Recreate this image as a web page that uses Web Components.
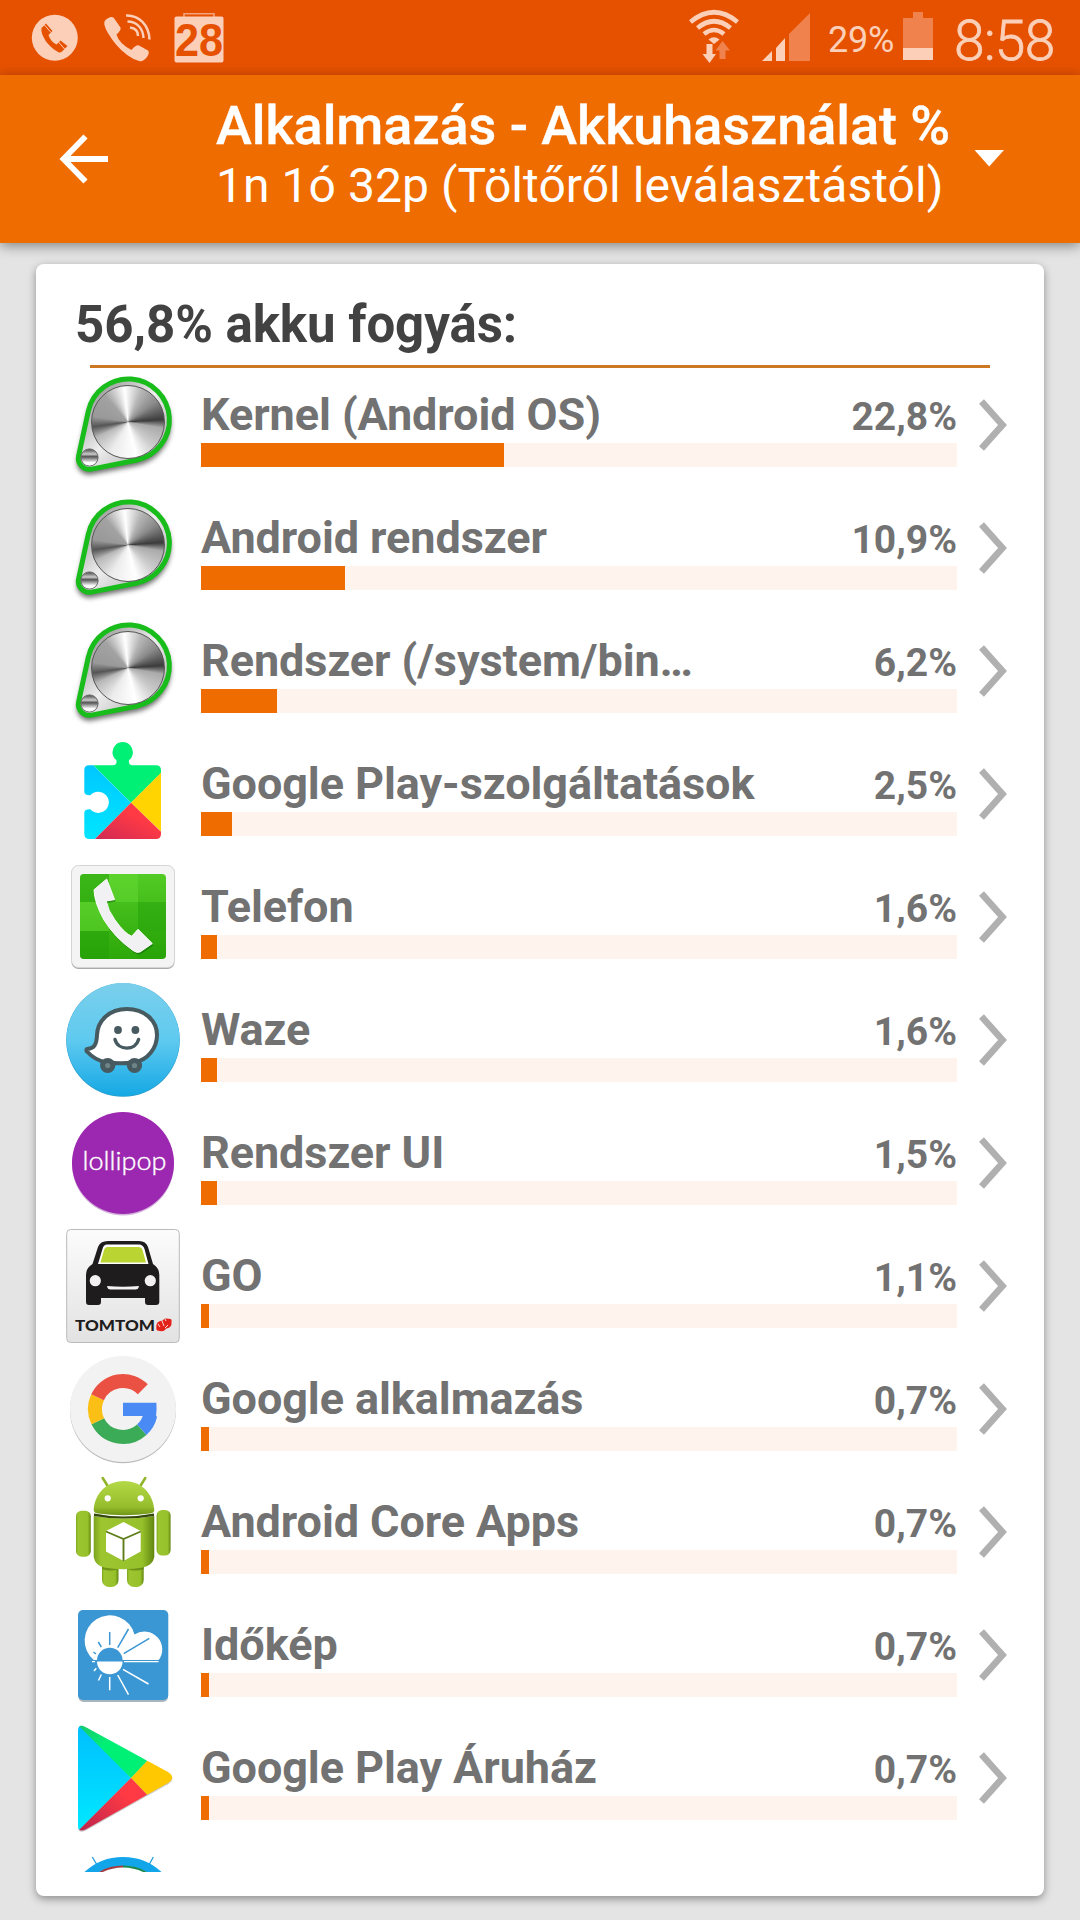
<!DOCTYPE html>
<html lang="hu">
<head>
<meta charset="utf-8">
<title>Akkuhasználat</title>
<style>
    html, body {
        margin: 0;
        height: 1920px;
        overflow: hidden;
        background: #e4e4e4;
        font-family: Roboto, sans-serif;
    }
    body {
        display: flex;
        flex-direction: column;
    }
</style>
</head>
<body>
<status-bar time="8:58" battery="29%"></status-bar>
<app-header>
    <span slot="title">Alkalmazás - Akkuhasználat %</span>
    <span slot="subtitle">1n 1ó 32p (Töltőről leválasztástól)</span>
</app-header>
<usage-card>
    <span slot="heading">56,8% akku fogyás:</span>
    <usage-row icon="knob" value="22,8%" fill="303">Kernel (Android OS)</usage-row>
    <usage-row icon="knob" value="10,9%" fill="144">Android rendszer</usage-row>
    <usage-row icon="knob" value="6,2%" fill="76">Rendszer (/system/bin…</usage-row>
    <usage-row icon="services" value="2,5%" fill="31">Google Play-szolgáltatások</usage-row>
    <usage-row icon="phone" value="1,6%" fill="16">Telefon</usage-row>
    <usage-row icon="waze" value="1,6%" fill="16">Waze</usage-row>
    <usage-row icon="lollipop" value="1,5%" fill="16">Rendszer UI</usage-row>
    <usage-row icon="tomtom" value="1,1%" fill="8">GO</usage-row>
    <usage-row icon="google" value="0,7%" fill="8">Google alkalmazás</usage-row>
    <usage-row icon="android" value="0,7%" fill="8">Android Core Apps</usage-row>
    <usage-row icon="weather" value="0,7%" fill="8">Időkép</usage-row>
    <usage-row icon="play" value="0,7%" fill="8">Google Play Áruház</usage-row>
    <app-icon name="ring"></app-icon>
</usage-card>

<script>
// All icons are drawn on a 114 x 114 canvas
const icons = {
    knob: `
        <defs>
            <linearGradient id="plate" x1="0" y1="0" x2="1" y2="1">
                <stop offset="0" stop-color="#777"/><stop offset=".5" stop-color="#eee"/><stop offset="1" stop-color="#999"/>
            </linearGradient>
            <filter id="soft" x="-20%" y="-20%" width="140%" height="140%"><feGaussianBlur stdDeviation="2.6"/></filter>
            <linearGradient id="screw" x1="0" y1="0" x2="0" y2="1">
                <stop offset="0" stop-color="#444"/><stop offset=".3" stop-color="#ccc"/><stop offset=".45" stop-color="#555"/><stop offset=".8" stop-color="#fff"/>
            </linearGradient>
        </defs>
        <path d="M22.3 43.3A41 41 0 1 1 70.3 92.2L25.4 101.1A11 11 0 0 1 12.6 88Z" transform="translate(0 4)" fill="#333" stroke="#333" stroke-width="3" opacity=".7" filter="url(#soft)"/>
        <path d="M22.3 43.3A41 41 0 1 1 70.3 92.2L25.4 101.1A11 11 0 0 1 12.6 88Z" fill="url(#plate)" stroke="#18bd1c" stroke-width="5"/>
        <foreignObject x="25" y="17" width="74" height="74"><div class="disc"></div></foreignObject>
        <circle cx="23.5" cy="89.5" r="8.6" fill="url(#screw)" stroke="#666" stroke-width="1"/>`,
    services: `
        <defs>
            <clipPath id="puzzle"><path d="M23 28.3H47Q51.5 28 50.3 23.1A10.2 10.2 0 1 1 63.1 23.1Q62 28 66.5 28.3H90Q95 28.3 95 33.3V97Q95 102 90 102H23.3Q18.3 102 18.3 97V75.5Q18.8 72 24.3 72.3A10.6 10.6 0 1 0 24.3 58.3Q18.8 58.6 18.3 55V33.3Q18.3 28.3 23 28.3Z"/></clipPath>
            <linearGradient id="blue" x1="0" y1="0" x2="0" y2="1"><stop offset="0" stop-color="#00c3ff"/><stop offset="1" stop-color="#00e6ff"/></linearGradient>
            <linearGradient id="red" x1="1" y1="0" x2="0" y2="1"><stop offset=".4" stop-color="#ff3a44"/><stop offset="1" stop-color="#cf2955"/></linearGradient>
        </defs>
        <g clip-path="url(#puzzle)">
            <path d="M0 0H114V17L65 65.7 27.3 28.3Z" fill="#00f076"/>
            <path d="M18 19L65 65.7 28 103H10V19Z" fill="url(#blue)"/>
            <path d="M65 65.7L96 34.7V95.5Z" fill="#ffd400"/>
            <path d="M65 65.7L103 102.5H28.5Z" fill="url(#red)"/>
        </g>`,
    phone: `
        <defs>
            <clipPath id="in"><rect x="14" y="14" width="86" height="85" rx="4"/></clipPath>
            <linearGradient id="g" x1="0" y1="0" x2="0" y2="1"><stop offset="0" stop-color="#52cb25"/><stop offset="1" stop-color="#2da80a"/></linearGradient>
        </defs>
        <rect x="5.5" y="6.5" width="103" height="102.5" rx="7" fill="#aaa"/>
        <rect x="5.5" y="5.5" width="103" height="102" rx="7" fill="#f4f4f4" stroke="#d4d4d4"/>
        <g clip-path="url(#in)">
            <rect x="14" y="14" width="86" height="85" fill="url(#g)"/>
            <path d="M14 14H43V42H14ZM72 42H100V71H72ZM14 71H43V99H14Z" fill="#1f9a06" opacity=".42"/>
            <path d="M43 14H72V42H43ZM14 42H43V71H14Z" fill="#6de23a" opacity=".4"/>
            <path d="M72 71H100V99H72Z" fill="#229c06" opacity=".3"/>
        </g>
        <path d="M40.7 19.6L28 30.2Q28.5 43 38 60Q49 78 67 90.5Q70.5 93.3 74 92L86.3 83.5 72 69.8 65.8 76.5Q59 74 49 60Q42 50.5 40.2 41L48.6 39.6Z" transform="translate(1 2)" fill="#16720a" opacity=".65"/>
        <path d="M40.7 19L28 29.8Q28.5 43 38 60Q49 78 67 90.5Q70.5 93.3 74 92L86.3 83.5 72 69.3 65.8 76.2Q59 74 49 60Q42 50.5 40.2 41L48.6 39.6Z" fill="#f1f1f3" stroke="#fff" stroke-width="1" stroke-linejoin="round"/>`,
    waze: `
        <defs><linearGradient id="sky" x1="0" y1="0" x2="0" y2="1"><stop offset="0" stop-color="#7acfeb"/><stop offset=".5" stop-color="#5fcaf0"/><stop offset="1" stop-color="#15a8e4"/></linearGradient></defs>
        <circle cx="57" cy="57" r="56.8" fill="#2a9cc8"/>
        <circle cx="57" cy="56.6" r="56.5" fill="url(#sky)"/>
        <path d="M61 26C43 26 31.5 38 31 52C30.6 61 28.5 65.5 21.5 66C20 66.2 20 68 21.5 69C26.5 74.5 33 78 40 79.2Q55 81.5 69 79.2C82 76.5 91 65 91 52C91 37 78 26 61 26Z" fill="#fff" stroke="#465a60" stroke-width="4" stroke-linejoin="round"/>
        <g fill="#465a60"><circle cx="41.7" cy="82.5" r="7.6"/><circle cx="68.5" cy="82.5" r="7.6"/><circle cx="52" cy="47" r="3.9"/><circle cx="69.4" cy="47" r="3.9"/></g>
        <g fill="#6e8487"><circle cx="41.7" cy="82.5" r="2.6"/><circle cx="68.5" cy="82.5" r="2.6"/></g>
        <path d="M49 56.5C52 68 69.5 68 72.6 56.5" fill="none" stroke="#465a60" stroke-width="3.4" stroke-linecap="round"/>`,
    lollipop: `
        <circle cx="57" cy="58.5" r="51" fill="#d3b4da"/>
        <circle cx="57" cy="57" r="51" fill="#9c27b0"/>
        <text x="16.5" y="64" font-family="Lato" font-weight="300" font-size="25" textLength="84" lengthAdjust="spacingAndGlyphs" fill="#fff" stroke="#fff" stroke-width=".4">lollipop</text>`,
    tomtom: `
        <defs><linearGradient id="bg" x1="0" y1="0" x2="0" y2="1"><stop offset="0" stop-color="#fcfcfc"/><stop offset="1" stop-color="#e2e2e2"/></linearGradient></defs>
        <rect x=".7" y=".5" width="112.6" height="113" rx="4" fill="url(#bg)" stroke="#bbb"/>
        <path d="M42 12H73Q80 12 82 18L87 35Q93.3 39 93.3 46V73Q93.3 76 90 76H82Q79 76 79 73V69H35V73Q35 76 32 76H23Q20 76 20 73V46Q20 39 26.5 35L32 18Q34 12 42 12Z" fill="#1f1c1d"/>
        <path d="M41 15.5H73Q77 15.5 78.5 20L82.5 35H32L36.5 20Q37.5 15.5 41 15.5Z" fill="#fff"/>
        <path d="M41.5 18H72.5Q75.5 18 76.5 21L80 33.5H34.5L38 21Q39 18 41.5 18Z" fill="#bad532"/>
        <circle cx="29.3" cy="51.7" r="5.6" fill="#f1f1f1"/><circle cx="84.3" cy="51.7" r="5.6" fill="#f1f1f1"/>
        <path d="M41 57Q57 58.5 73 57Q72.5 60.5 69.5 60.5H44.5Q41.5 60.5 41 57Z" fill="#f1f1f1"/>
        <text x="9" y="101.8" font-family="Lato" font-weight="900" font-size="15" textLength="80" lengthAdjust="spacingAndGlyphs" fill="#1f1c1d">TOMTOM</text>
        <g fill="#e2231a"><circle cx="95.5" cy="97" r="5.2"/><circle cx="100.5" cy="94.5" r="5"/><circle cx="92.5" cy="99.5" r="2.2"/><circle cx="103.5" cy="92" r="2.2"/></g>
        <path d="M96 92L98 97M99 99L102 96M92 95L94 98M99 90L100 92" stroke="#fbd9d6" stroke-width="1"/>`,
    google: `
        <circle cx="57" cy="58.3" r="53" fill="#bbb"/>
        <circle cx="57" cy="57" r="53" fill="#f2f2f2"/>
        <g fill="none" stroke-width="14">
            <path d="M75.7 77.8A28 28 0 0 0 84.3 63" stroke="#4a8af4"/>
            <path d="M31.8 69.3A28 28 0 0 0 75.7 77.8" stroke="#3cab58"/>
            <path d="M31.6 45.2A28 28 0 0 0 31.8 69.3" stroke="#fbbf16"/>
            <path d="M76.8 37.2A28 28 0 0 0 31.6 45.2" stroke="#eb5143"/>
        </g>
        <path d="M57 50.7H90.4Q91 57 90 65L76 64H57Z" fill="#4a8af4"/>`,
    android: `
        <defs>
            <linearGradient id="b" x1="0" y1="0" x2="1" y2="0"><stop offset="0" stop-color="#7ba31c"/><stop offset=".12" stop-color="#9cc52f"/><stop offset=".8" stop-color="#97c12b"/><stop offset="1" stop-color="#62860f"/></linearGradient>
            <linearGradient id="hd" x1="0" y1="0" x2="0" y2="1"><stop offset="0" stop-color="#b3d947"/><stop offset=".75" stop-color="#96bd2b"/><stop offset="1" stop-color="#6f9518"/></linearGradient>
        </defs>
        <path d="M36.7 3L42 11.5M79.3 3L74 11.5" stroke="#8fb52b" stroke-width="2.6" stroke-linecap="round"/>
        <g fill="url(#b)">
            <rect x="36" y="84" width="16.5" height="28" rx="7"/><rect x="61" y="84" width="16.7" height="28" rx="7"/>
            <rect x="10" y="35.7" width="14.8" height="46" rx="5.5"/><rect x="90.6" y="35" width="14" height="45.5" rx="5.5"/>
        </g>
        <path d="M36 91H52.5V94Q44 97 36 94ZM61 91H77.7V94Q69 97 61 94Z" fill="#5c7d10" opacity=".7"/>
        <path d="M27.7 41Q57 46 88.3 41V82Q87 90 77 92.5Q57 96 38 92.5Q29 90 27.7 82Z" fill="url(#b)"/>
        <path d="M28 38.5Q57 44.5 88 38.5V41Q57 46 28 41Z" fill="#34480b"/>
        <path d="M27.7 35C29 17 42 6 58 6S87 17 88.3 35Q88.3 38 84 38.5Q58 42 32 38.5Q27.7 38 27.7 35Z" fill="url(#hd)"/>
        <circle cx="41.7" cy="23.3" r="3.1" fill="#fff"/><circle cx="74.7" cy="23.3" r="3.1" fill="#fff"/>
        <path d="M57.5 47L74.7 56V76.5L57.5 86 40 76.5V56Z" fill="#fff"/>
        <path d="M40 56.5L57.5 64 74.7 56.5M57.5 64V86" fill="none" stroke="#5f7d19" stroke-width="1.9"/>`,
    weather: `
        <rect x="12.5" y="14" width="89.5" height="90" rx="5" fill="#a9b6c0"/>
        <rect x="12" y="12" width="90.3" height="90" rx="5" fill="#3b97d3"/>
        <path d="M28 62.3A25.3 25.3 0 1 1 68.5 36.6A17.8 17.8 0 0 1 92.5 62.3Z" fill="#fff"/>
        <path d="M26 62.8H93" stroke="#3b97d3" stroke-width="1.4"/>
        <path d="M26 63.6H29M58 63.6H92.5" stroke="#fff" stroke-width="1.2"/>
        <path d="M31 62.5A12.8 12.8 0 0 1 56.6 62.5Z" fill="#3b97d3"/>
        <path d="M31 63.5A12.8 12.8 0 0 0 56.6 63.5Z" fill="#fff"/>
        <path d="M43.7 34V47M62.5 31L51.7 49.7M83.3 40.3L57.7 55.7M32.3 44L35.3 49M27.5 54L30 56" stroke="#3b97d3" stroke-width="1.5"/>
        <path d="M43.7 79V92.3M51.7 77L62.5 96.7M57 71.3L82.5 86M35.3 76.5L32.5 82.5M30.3 70.3L28 73" stroke="#fff" stroke-width="1.5"/>`,
    play: `
        <defs>
            <clipPath id="tri"><path d="M12 10Q12 2.5 19 5.7L102 51Q110.5 56.7 102 62L20 108.3Q12 112 12 104.5Z"/></clipPath>
            <linearGradient id="pb" x1="0" y1="0" x2="0" y2="1"><stop offset="0" stop-color="#00bdff"/><stop offset="1" stop-color="#00e8ff"/></linearGradient>
            <linearGradient id="pr" x1="1" y1="0" x2="0" y2="1"><stop offset=".3" stop-color="#ff3a44"/><stop offset="1" stop-color="#b8224d"/></linearGradient>
            <linearGradient id="pg" x1="0" y1="0" x2="1" y2="1"><stop offset="0" stop-color="#1cc36a"/><stop offset=".4" stop-color="#00f076"/></linearGradient>
        </defs>
        <path d="M12 10Q12 2.5 19 5.7L102 51Q110.5 56.7 102 62L20 108.3Q12 112 12 104.5Z" transform="translate(0 1.2)" fill="#ccc"/>
        <g clip-path="url(#tri)">
            <path d="M0 0H12L65 57 13 109.5H0Z" fill="url(#pb)"/>
            <path d="M13 5L20 0 81.3 39.7 65 57Z" fill="url(#pg)"/>
            <path d="M81.3 39.7L114 50V62L81.3 74 65 57Z" fill="#ffc800"/>
            <path d="M65 57L81.3 74 20 114 12 110Z" fill="url(#pr)"/>
        </g>`,
    ring: `
        <path d="M26.3 13L30.5 20M87.3 13L83.5 20" stroke="#1d9fd8" stroke-width="1.3"/>
        <circle cx="57" cy="70" r="52.5" fill="none" stroke="#12a5ea" stroke-width="9"/>
        <path d="M57 22.5A47.5 47.5 0 0 0 30 31" fill="none" stroke="#a33b3e" stroke-width="1.8"/>
        <path d="M57 22.5A47.5 47.5 0 0 1 84 31" fill="none" stroke="#1c8a4f" stroke-width="1.8"/>`
};

class AppIcon extends HTMLElement {
    constructor() {
        super();
        this.attachShadow({ mode: 'open' });
    }
    connectedCallback() {
        this.shadowRoot.innerHTML = `
<style>
    :host {
        display: block;
        width: 114px;
        height: 114px;
        flex: none;
    }
    svg {
        display: block;
        overflow: visible;
    }
    .disc {
        box-sizing: border-box;
        width: 74px;
        height: 74px;
        border: 1.5px solid #555;
        border-radius: 50%;
        background: conic-gradient(from -6deg, #fff, #b5b5b5 30deg, #8a8a8a 60deg, #3c3c3c 92deg, #aaa 106deg, #ccc 140deg, #fff 172deg, #ececec 215deg, #b8b8b8 250deg, #555 268deg, #999 285deg, #a2a2a2 325deg, #fff);
    }
</style>
<svg width="114" height="114" viewBox="0 0 114 114">${icons[this.getAttribute('name')]}</svg>`;
    }
}
window.customElements.define('app-icon', AppIcon);

class StatusBar extends HTMLElement {
    constructor() {
        super();
        this.attachShadow({ mode: 'open' });
    }
    connectedCallback() {
        this.shadowRoot.innerHTML = `
<style>
    :host {
        display: flex;
        justify-content: space-between;
        height: 75px;
        flex: none;
        background: #e65100;
        color: #fbcfb8;
    }
    div {
        display: flex;
        align-items: flex-start;
    }
    svg {
        display: block;
        height: 75px;
    }
    .battery {
        font-size: 36px;
        line-height: 75px;
        margin-top: 3px;
        letter-spacing: -0.3px;
    }
    .time {
        width: 102px;
        margin-right: 24px;
        font-size: 55px;
        line-height: 75px;
        margin-top: 4px;
        font-weight: 300;
        -webkit-text-stroke: 0.8px;
        letter-spacing: -0.6px;
    }
</style>
<div>
    <svg width="240" viewBox="0 0 240 75">
        <circle cx="54.8" cy="37.8" r="23" fill="#fbcfb8"/>
        <path d="M46 23.5L41.5 28Q40.5 33 46 41.5Q52 49 58.5 52.3Q60.5 53 62 51.5L67.5 46 60.5 40.5 56.5 44.5Q50.5 41.5 48.5 35L52.5 31Z" fill="#e65100"/>
        <path d="M44 24.5L51 32.5M58.5 42L65 49.5" stroke="#fbcfb8" stroke-width="1"/>
        <path d="M105 20.5Q110 15.5 113.5 17.5L120.5 27.5Q121.5 30 116.5 34.5Q119 43.5 131.5 50Q136 44.5 139 45.5L148 50.5Q150 52.5 147 57Q143.5 62 139 61Q127 57.5 116 44.5Q106 32 104.3 24.5Q104 22 105 20.5Z" fill="#fbcfb8"/>
        <g fill="none" stroke="#fbcfb8" stroke-width="2.5"><path d="M126 15.5C139 15 149 25 149.5 39.5"/><path d="M127.5 21.5C136.5 21.5 143 28 143.5 38"/><path d="M130 27.5C135 28 138 31 138 36"/></g>
        <path d="M184 17V13.7H214V17" fill="none" stroke="#f3a27c" stroke-width="1.6"/>
        <rect x="174.5" y="16.5" width="49" height="46" rx="2" fill="#fbcfb8"/>
        <text x="175" y="55.5" font-family="Liberation Sans" font-weight="700" font-size="46" textLength="48" lengthAdjust="spacingAndGlyphs" fill="#e65100">28</text>
    </svg>
</div>
<div>
    <svg width="140" viewBox="688 0 140 75">
        <g fill="none" stroke="#fbcfb8" stroke-width="4.6"><path d="M690.5 22Q714 2.500 737.5 22"/><path d="M697.5 28Q714 14.500 730.5 28"/><path d="M704 34Q714 26 724 34"/></g>
        <path d="M708.5 39.5Q714 35 719.5 39.5L714 44Z" fill="#fbcfb8"/>
        <path d="M706.5 44H712.5V54H716L709.5 63 702.5 54H706.5Z" fill="#fbcfb8"/>
        <path d="M719.5 59V50.5H715.5L722.5 41 730 50.5H725.5V59Z" fill="#f0824d"/>
        <path d="M762 61L772 51V61ZM776 61V48L785 38V61Z" fill="#fbcfb8"/>
        <path d="M789 61V34L810 13V61Z" fill="#f0824d"/>
    </svg>
    <span class="battery">${this.getAttribute('battery')}</span>
    <svg width="60" viewBox="894 0 60 75">
        <path d="M903 18H913V12H923V18H933V48H903Z" fill="#f0824d"/>
        <path d="M903 48H933V60H903Z" fill="#fbcfb8"/>
    </svg>
    <span class="time">${this.getAttribute('time')}</span>
</div>`;
    }
}
window.customElements.define('status-bar', StatusBar);

const headerTemplate = document.createElement('template');
headerTemplate.innerHTML = `
<style>
    :host {
        display: flex;
        height: 168px;
        flex: none;
        background: #ef6c00;
        color: #fff;
        box-shadow: 0 3px 12px rgba(0, 0, 0, .42);
        z-index: 1;
    }
    .back {
        width: 216px;
    }
    .texts {
        width: 740px;
        padding-top: 21px;
        white-space: nowrap;
    }
    .title {
        font-size: 54px;
        line-height: 60px;
        font-weight: 500;
        letter-spacing: -0.05px;
        -webkit-text-stroke: 0.4px;
    }
    .subtitle {
        margin-top: 2px;
        font-size: 48px;
        line-height: 56px;
        letter-spacing: 0.06px;
    }
</style>
<svg class="back" height="168" viewBox="0 0 216 168"><path d="M85.5 61.5L63.5 84 85.5 106.5M63.5 84H108" fill="none" stroke="#fff" stroke-width="5.8"/></svg>
<div class="texts">
    <div class="title"><slot name="title"></slot></div>
    <div class="subtitle"><slot name="subtitle"></slot></div>
</div>
<svg width="60" height="168" viewBox="956 0 60 168"><path d="M974.5 75H1004L989.2 91.5Z" fill="#fff"/></svg>`;

class AppHeader extends HTMLElement {
    constructor() {
        super();
        this.attachShadow({ mode: 'open' });
        this.shadowRoot.appendChild(headerTemplate.content.cloneNode(true));
    }
}
window.customElements.define('app-header', AppHeader);

const cardTemplate = document.createElement('template');
cardTemplate.innerHTML = `
<style>
    :host {
        display: block;
        box-sizing: border-box;
        width: 1008px;
        height: 1632px;
        margin: 21px 36px 0;
        padding-top: 31px;
        border-radius: 8px;
        background: #fff;
        box-shadow: 0 3px 8px rgba(0, 0, 0, .38);
    }
    .heading {
        padding-left: 39px;
        font-size: 51px;
        line-height: 60px;
        font-weight: 700;
        letter-spacing: -0.05px;
        color: #424242;
    }
    hr {
        width: 900px;
        height: 3px;
        margin: 10px 54px 0;
        border: 0;
        background: #cc7722;
    }
    .list {
        height: 1504px;
        padding-left: 30px;
        overflow: hidden;
    }
</style>
<div class="heading"><slot name="heading"></slot></div>
<hr>
<div class="list"><slot></slot></div>`;

class UsageCard extends HTMLElement {
    constructor() {
        super();
        this.attachShadow({ mode: 'open' });
        this.shadowRoot.appendChild(cardTemplate.content.cloneNode(true));
    }
}
window.customElements.define('usage-card', UsageCard);

class UsageRow extends HTMLElement {
    constructor() {
        super();
        this.attachShadow({ mode: 'open' });
    }
    connectedCallback() {
        this.shadowRoot.innerHTML = `
<style>
    :host {
        display: flex;
        height: 123px;
        color: #727272;
        font-weight: 700;
    }
    .content {
        width: 756px;
        margin-left: 21px;
        padding-top: 20px;
    }
    .line {
        display: flex;
        justify-content: space-between;
        align-items: baseline;
        height: 54px;
        line-height: 54px;
        white-space: nowrap;
    }
    .name {
        font-size: 45px;
        letter-spacing: -0.08px;
    }
    .value {
        font-size: 39px;
    }
    .bar {
        height: 24px;
        margin-top: 1px;
        background: #fff4ed;
    }
    .fill {
        height: 24px;
        background: #ef6c00;
    }
</style>
<app-icon name="${this.getAttribute('icon')}"></app-icon>
<div class="content">
    <div class="line">
        <span class="name"><slot></slot></span>
        <span class="value">${this.getAttribute('value')}</span>
    </div>
    <div class="bar"><div class="fill" style="width: ${this.getAttribute('fill')}px"></div></div>
</div>
<svg width="60" height="114" viewBox="957 0 60 114"><path d="M981.5 33.5L1002.500 57 981.5 80.500" fill="none" stroke="#b0b0b0" stroke-width="6.6"/></svg>`;
    }
}
window.customElements.define('usage-row', UsageRow);
</script>
</body>
</html>
